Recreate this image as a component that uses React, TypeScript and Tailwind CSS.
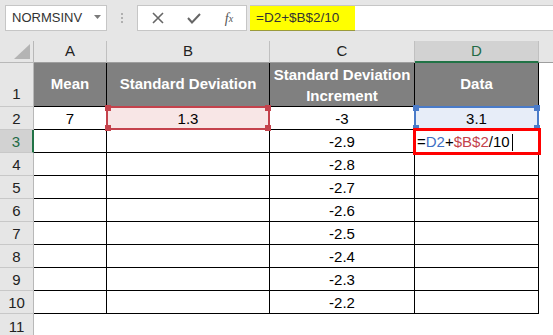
import React from "react";

const cVals = ["-3", "-2.9", "-2.8", "-2.7", "-2.6", "-2.5", "-2.4", "-2.3", "-2.2"];

function RowHead({ n, active }: { n: number; active?: boolean }) {
  return (
    <div
      className={
        "flex items-center justify-center pt-[2px] text-[15px] border-b border-[#c8c8c8] " +
        (active
          ? "bg-[#d2d2d2] text-[#1f6b45] border-r-2 border-r-[#217346]"
          : "bg-[#e6e6e6] text-[#222] border-r border-r-[#b8b8b8]")
      }
    >
      {n}
    </div>
  );
}

function Handles({ color }: { color: string }) {
  const cls = "absolute w-[6px] h-[6px] " + color;
  return (
    <>
      <div className={cls + " -left-[3px] -top-[3px]"} />
      <div className={cls + " -right-[3px] -top-[3px]"} />
      <div className={cls + " -left-[3px] -bottom-[3px]"} />
      <div className={cls + " -right-[3px] -bottom-[3px]"} />
    </>
  );
}

export default function App() {
  const cell = "flex items-center justify-center pt-[2px] text-[15px] text-black border-r border-b border-black bg-white";
  return (
    <div className="w-[553px] h-[335px] overflow-hidden bg-[#e6e6e6] font-['Liberation_Sans',Arial,sans-serif]">
      {/* toolbar */}
      <div className="h-[41px] pt-[5px] pl-[5px] flex items-start">
        <div className="w-[102px] h-[26px] bg-white border border-[#c6c6c6] flex items-center pl-[6px] pr-[5px] text-[13px] text-[#333]">
          <span className="flex-1">NORMSINV</span>
          <svg width="7" height="4" viewBox="0 0 7 4" className="mb-[2px]">
            <path d="M0 0 L7 0 L3.5 4 Z" fill="#7a7a7a" />
          </svg>
        </div>
        <div className="w-[30px] h-[26px] flex flex-col items-center justify-center gap-[2px]">
          <div className="w-[2px] h-[2px] bg-[#b0b0b0]" />
          <div className="w-[2px] h-[2px] bg-[#b0b0b0]" />
          <div className="w-[2px] h-[2px] bg-[#b0b0b0]" />
        </div>
        <div className="w-[110px] h-[26px] bg-white border border-[#c6c6c6] flex items-center">
          <div className="w-[37px] flex justify-center pl-[2px]">
            <svg width="12" height="12" viewBox="0 0 12 12">
              <path d="M1 1 L11 11 M11 1 L1 11" stroke="#666" strokeWidth="1.6" />
            </svg>
          </div>
          <div className="w-[37px] flex justify-center">
            <svg width="14" height="11" viewBox="0 0 14 11">
              <path d="M1 5 L5 9.5 L13 1" stroke="#666" strokeWidth="2" fill="none" />
            </svg>
          </div>
          <div className="w-[34px] flex justify-center text-[#555] italic text-[14px] font-['Liberation_Serif',serif]">
            f<span className="text-[10px] mt-[3px]">x</span>
          </div>
        </div>
        <div className="ml-[3px] w-[105px] h-[26px] bg-[#ffff00] border-t border-b border-[#c6c6c6] border-b-[#9a9a3a] flex items-center pl-[6px] text-[13.5px] text-[#333]">
          =D2+$B$2/10
        </div>
        <div className="flex-1 h-[26px] bg-white border-t border-b border-[#c6c6c6]" />
      </div>

      {/* grid */}
      <div className="grid grid-cols-[34px_73px_163px_145px_124px_14px] grid-rows-[22px_44px_repeat(9,23px)_21px]">
        {/* column headers */}
        <div className="bg-[#e6e6e6] border-r border-b border-[#b8b8b8] relative">
          <svg width="16" height="15" viewBox="0 0 16 15" className="absolute right-[3px] bottom-[3px]">
            <path d="M16 0 L16 15 L0 15 Z" fill="#b4b4b4" />
          </svg>
        </div>
        <div className="bg-[#e6e6e6] border-r border-b border-[#c0c0c0] border-b-[#9e9e9e] flex items-center justify-center text-[15px] text-[#222]">A</div>
        <div className="bg-[#e6e6e6] border-r border-b border-[#c0c0c0] border-b-[#9e9e9e] flex items-center justify-center text-[15px] text-[#222]">B</div>
        <div className="bg-[#e6e6e6] border-r border-b border-[#c0c0c0] border-b-[#9e9e9e] flex items-center justify-center text-[15px] text-[#222]">C</div>
        <div className="bg-[#d2d2d2] border-r border-[#c0c0c0] border-b-2 border-b-[#217346] flex items-center justify-center text-[15px] text-[#1f6b45]">D</div>
        <div className="bg-[#e6e6e6] border-b border-[#9e9e9e]" />

        {/* row 1 */}
        <div className="flex items-end justify-center pb-[1px] text-[15px] text-[#222] bg-[#e6e6e6] border-r border-b border-r-[#b8b8b8] border-b-[#c8c8c8]">1</div>
        <div className="bg-[#808080] border-r border-b border-black flex items-center justify-center text-white font-bold text-[15px]">Mean</div>
        <div className="bg-[#808080] border-r border-b border-black flex items-center justify-center text-white font-bold text-[15px]">Standard Deviation</div>
        <div className="bg-[#808080] border-r border-b border-black flex flex-col items-center justify-center text-white font-bold text-[15px] leading-[21px]">
          <span>Standard Deviation</span>
          <span>Increment</span>
        </div>
        <div className="bg-[#808080] border-r border-b border-black flex items-center justify-center text-white font-bold text-[15px]">Data</div>
        <div className="bg-white" />

        {/* rows 2-10 */}
        {cVals.map((v, i) => {
          const n = i + 2;
          return (
            <React.Fragment key={n}>
              <RowHead n={n} active={n === 3} />
              <div className={cell}>{n === 2 ? "7" : ""}</div>
              {n === 2 ? (
                <div className={cell + " relative !bg-[#f8e6e6]"}>
                  1.3
                  <div className="absolute -left-[1px] -top-[1px] -right-[1px] -bottom-[1px] border-2 border-[#c4424c]">
                    <Handles color="bg-[#c4424c]" />
                  </div>
                </div>
              ) : (
                <div className={cell} />
              )}
              <div className={cell}>{v}</div>
              {n === 2 ? (
                <div className={cell + " relative !bg-[#e7edf8]"}>
                  3.1
                  <div className="absolute -left-[1px] -top-[1px] -right-[1px] -bottom-[1px] border-2 border-[#4a7bc9]">
                    <Handles color="bg-[#4a7bc9]" />
                  </div>
                </div>
              ) : n === 3 ? (
                <div className={cell + " relative !justify-start pl-[2px]"}>
                  <span className="text-black">=</span>
                  <span className="text-[#3e6fc4]">D2</span>
                  <span className="text-black">+</span>
                  <span className="text-[#c4424c]">$B$2</span>
                  <span className="text-black">/10</span>
                  <span className="inline-block w-[1px] h-[17px] bg-black ml-[2px]" />
                  <div className="absolute -left-[2px] -top-[2px] -right-[3px] -bottom-[3px] border-[3px] border-[#ff0000]" />
                </div>
              ) : (
                <div className={cell} />
              )}
              <div className="bg-white" />
            </React.Fragment>
          );
        })}

        {/* row 11 */}
        <div className="flex items-start justify-center pt-[2px] text-[15px] text-[#222] bg-[#e6e6e6] border-r border-[#b8b8b8]">11</div>
        <div className="bg-white col-span-5" />
      </div>
    </div>
  );
}
